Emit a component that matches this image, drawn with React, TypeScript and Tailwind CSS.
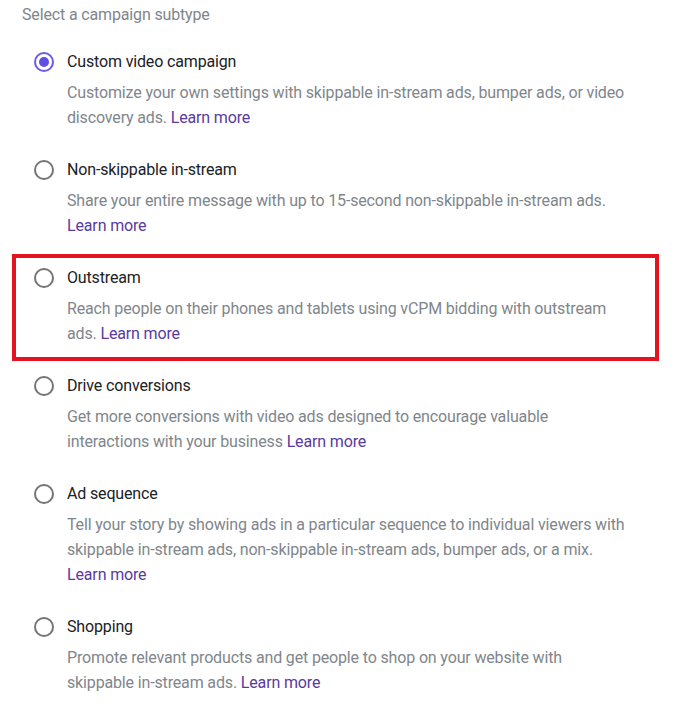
import React from "react";

type Subtype = {
  title: string;
  desc: string;
  checked?: boolean;
  highlight?: boolean;
};

const subtypes: Subtype[] = [
  {
    title: "Custom video campaign",
    desc: "Customize your own settings with skippable in-stream ads, bumper ads, or video discovery ads.",
    checked: true,
  },
  {
    title: "Non-skippable in-stream",
    desc: "Share your entire message with up to 15-second non-skippable in-stream ads.",
  },
  {
    title: "Outstream",
    desc: "Reach people on their phones and tablets using vCPM bidding with outstream ads.",
    highlight: true,
  },
  {
    title: "Drive conversions",
    desc: "Get more conversions with video ads designed to encourage valuable interactions with your business",
  },
  {
    title: "Ad sequence",
    desc: "Tell your story by showing ads in a particular sequence to individual viewers with skippable in-stream ads, non-skippable in-stream ads, bumper ads, or a mix.",
  },
  {
    title: "Shopping",
    desc: "Promote relevant products and get people to shop on your website with skippable in-stream ads.",
  },
];

function Radio({ checked }: { checked?: boolean }) {
  return (
    <div
      className={`mt-[2px] w-5 h-5 shrink-0 rounded-full border-2 flex items-center justify-center ${
        checked ? "border-[#6b5ce6]" : "border-[#757575]"
      }`}
    >
      {checked && <div className="w-[10px] h-[10px] rounded-full bg-[#5e4fe2]" />}
    </div>
  );
}

function Item({ item }: { item: Subtype }) {
  return (
    <div className="flex items-start gap-[13px]">
      <Radio checked={item.checked} />
      <div className="w-[562px]">
        <div className="text-[16px] leading-[24px] tracking-[-0.15px] text-[#202124]">{item.title}</div>
        <p className="mt-[6px] text-[16px] leading-[25px] tracking-[-0.15px] text-[#80868b]">
          {item.desc} <span className="text-[#5a3aa0] cursor-pointer">Learn more</span>
        </p>
      </div>
    </div>
  );
}

export default function App() {
  return (
    <div
      className="min-h-screen bg-white pt-[3px]"
      style={{ fontFamily: "Roboto, 'Noto Sans', sans-serif" }}
    >
      <div className="pl-[22px] text-[16px] leading-[24px] tracking-[-0.15px] text-[#80868b]">
        Select a campaign subtype
      </div>

      <div className="mt-[23px] pl-[34px] w-[629px] flex flex-col gap-[28px]">
        {subtypes.map((s) =>
          s.highlight ? (
            <div
              key={s.title}
              className="-ml-[22px] -mr-[30px] -mt-[12px] -mb-[15px] pl-[18px] pt-[8px] pb-[11px] border-4 border-[#e3141f]"
            >
              <Item item={s} />
            </div>
          ) : (
            <Item key={s.title} item={s} />
          )
        )}
      </div>
    </div>
  );
}
